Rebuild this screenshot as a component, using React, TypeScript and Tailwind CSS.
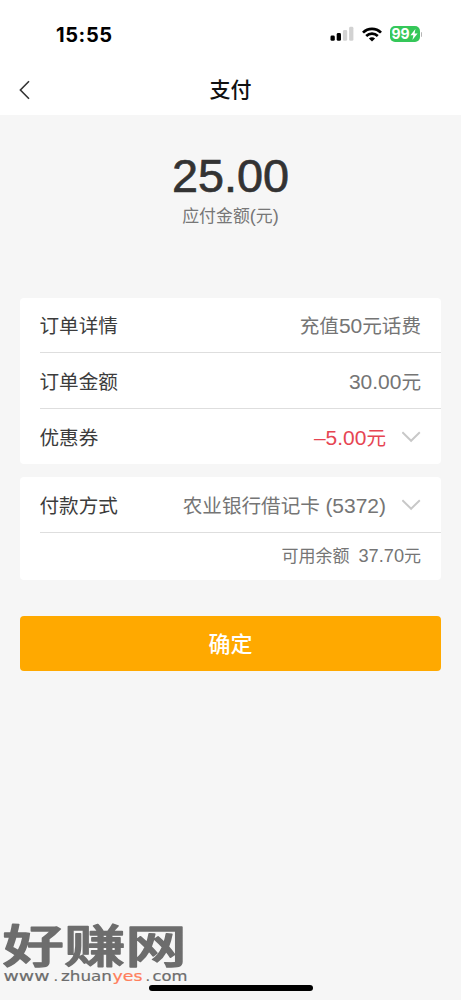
import React from 'react';

const ChevronDown = () => (
  <svg className="-mt-[3px] ml-[16px] h-[12px] w-[19px] shrink-0" viewBox="0 0 19 12" fill="none" stroke="#c8c8c8" strokeWidth="1.9">
    <path d="M0.4 1.2L9.1 9.8L17.8 1.2" />
  </svg>
);

const StatusBar = () => (
  <div className="flex h-[68px] items-center justify-between pl-[56px] pr-[39px]">
    <span className="pt-[2px] text-[20px] font-bold leading-none tracking-[0.6px] text-black">15:55</span>
    <div className="flex items-center">
      <svg className="h-[16px] w-[24px]" viewBox="0 0 24 16">
        <rect x="0.5" y="9.5" width="4.3" height="5.3" rx="1.4" fill="#000" />
        <rect x="6.7" y="7" width="4.3" height="7.8" rx="1.4" fill="#000" />
        <rect x="12.9" y="4" width="4.3" height="10.8" rx="1.4" fill="#d2d2d2" />
        <rect x="19.1" y="0.8" width="4.3" height="14" rx="1.4" fill="#d2d2d2" />
      </svg>
      <svg className="ml-[8px] h-[15px] w-[20px]" viewBox="0 0 20 15" fill="none" stroke="#000" strokeWidth="2.7">
        <path d="M1 5.6C6 0.6 14 0.6 19 5.6" />
        <path d="M4.2 9C7.6 5.9 12.4 5.9 15.8 9" />
        <path d="M6.9 11.4C8.7 9.8 11.3 9.8 13.1 11.4L10 14.6Z" fill="#000" stroke="none" />
      </svg>
      <div className="ml-[8px] flex h-[16px] w-[30px] items-center justify-center rounded-[5px] bg-[#35c759] text-white">
        <span className="text-[14px] font-bold leading-none">99</span>
        <svg className="h-[11px] w-[8px]" viewBox="0 0 8 11" fill="#fff">
          <path d="M5.4 0L0.4 6.2H3.4L2.4 11L7.6 4.6H4.6Z" />
        </svg>
      </div>
      <div className="ml-px h-[5px] w-[1.5px] rounded-r bg-[#b5b5b5]" />
    </div>
  </div>
);

// digits are set slightly larger than the Chinese text beside them
const Num = ({ children }: { children: React.ReactNode }) => (
  <span className="font-['Liberation_Sans',sans-serif] text-[1.07em]">{children}</span>
);

interface RowProps {
  label: string;
  children: React.ReactNode;
  height?: string;
  last?: boolean;
}

const Row = ({ label, children, height = 'h-[56px]', last = false }: RowProps) => (
  <div className={`flex items-center justify-between pr-5 ${height} ${last ? '' : 'border-b border-[#dedede]'}`}>
    <span className="-ml-[0.5px] pt-[4px] text-[19.6px] text-[#3c3c3c]">{label}</span>
    <div className="flex items-center pt-[3px] text-[19.6px] text-[#757575]">{children}</div>
  </div>
);

const Watermark = () => (
  <svg className="absolute bottom-0 left-0 h-[100px] w-[192px] overflow-visible" viewBox="0 0 192 100">
    <g transform="translate(2.5 62.5) scale(1.35 1)">
      <text
        x="0"
        y="0"
        fontSize="45.5"
        fontWeight="500"
        fill="#6d6d6d"
        stroke="#6d6d6d"
        strokeWidth="1.4"
        strokeLinejoin="round"
        fontFamily="'Noto Sans CJK SC', sans-serif"
      >
        好赚网
      </text>
    </g>
    <g fontSize="14.5" fill="#6d6d6d" stroke="#6d6d6d" strokeWidth="0.2" fontFamily="'DejaVu Sans', sans-serif">
      <text x="3.5" y="81" textLength="46" lengthAdjust="spacingAndGlyphs">www</text>
      <text x="53.5" y="81">.</text>
      <text x="61" y="81" textLength="51" lengthAdjust="spacingAndGlyphs">zhuan</text>
      <text x="112.5" y="81" textLength="30" lengthAdjust="spacingAndGlyphs" fill="#ff7f5c" stroke="#ff7f5c">yes</text>
      <text x="145.5" y="81">.</text>
      <text x="152.5" y="81" textLength="35" lengthAdjust="spacingAndGlyphs">com</text>
    </g>
  </svg>
);

const App = () => {
  return (
    <div className="relative flex h-[1000px] w-full flex-col overflow-hidden bg-[#f6f6f6] font-['Inter','Noto_Sans_CJK_SC',sans-serif] leading-none">
      <header className="h-[115px] bg-white">
        <StatusBar />
        <div className="grid h-[43px] grid-cols-[1fr_auto_1fr] items-center px-[19px]">
          <svg className="h-[20px] w-[12px]" viewBox="0 0 12 20" fill="none" stroke="#333" strokeWidth="1.6">
            <path d="M10 1.2L1.4 10L10 18.8" />
          </svg>
          <h1 className="text-[21px] font-medium text-[#111]">支付</h1>
        </div>
      </header>

      <main className="flex flex-col px-5">
        <div className="flex h-[183px] flex-col items-center pt-[38px]">
          <div className="font-['Liberation_Sans',sans-serif] text-[46.8px] text-[#333] [-webkit-text-stroke:0.7px_#333]">25.00</div>
          <div className="mt-[7px] text-[16.9px] text-[#777]">
            应付金额<Num>(</Num>元<Num>)</Num>
          </div>
        </div>

        <section className="rounded-[4px] bg-white pl-5">
          <Row label="订单详情" height="h-[55px]">
            <span>充值<Num>50</Num>元话费</span>
          </Row>
          <Row label="订单金额">
            <span><Num>30.00</Num>元</span>
          </Row>
          <Row label="优惠券" height="h-[55px]" last>
            <span className="text-[#e64552]"><Num>–5.00</Num>元</span>
            <ChevronDown />
          </Row>
        </section>

        <section className="mt-[13px] rounded-[4px] bg-white pl-5">
          <Row label="付款方式">
            <span>农业银行借记卡 <Num>(5372)</Num></span>
            <ChevronDown />
          </Row>
          <div className="flex h-[47px] items-center justify-end gap-[9px] pr-5 text-[17px] text-[#757575]">
            <span>可用余额</span>
            <span><Num>37.70</Num>元</span>
          </div>
        </section>

        <button className="mt-[36px] h-[55px] rounded-[4px] bg-[#ffa900] text-[22px] font-medium text-white">确定</button>
      </main>

      <Watermark />
      <div className="absolute bottom-[9px] left-[149px] h-[6px] w-[164px] rounded-full bg-black" />
    </div>
  );
};

export default App;
